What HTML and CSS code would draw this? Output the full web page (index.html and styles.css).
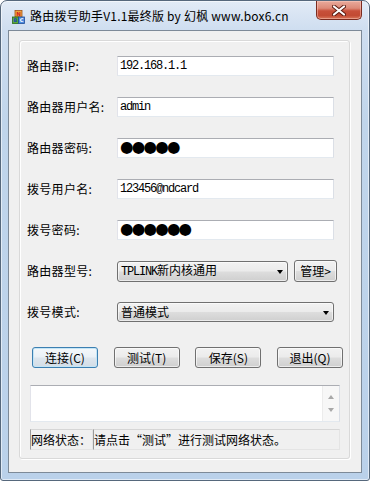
FILE: index.html
```html
<!DOCTYPE html>
<html lang="zh-CN">
<head>
<meta charset="utf-8">
<title>路由拨号助手</title>
<link rel="stylesheet" href="styles.css">
</head>
<body>
<div class="window">
  <div class="titlebar">
    <svg class="app-icon" width="13" height="14" viewBox="0 0 13 14">
      <rect x="3" y="0.5" width="7" height="6.5" fill="#f0a53c" stroke="#a0521a" stroke-width="0.8"/>
      <text x="6.5" y="5.8" font-size="5.5" font-family="DejaVu Sans" font-weight="bold" fill="#d21f1f" text-anchor="middle">N</text>
      <rect x="0.5" y="7" width="6" height="6.5" fill="#5aaa3c" stroke="#2b6a1c" stroke-width="0.8"/>
      <text x="3.5" y="12.3" font-size="5" font-family="DejaVu Sans" font-weight="bold" fill="#1e4ea8" text-anchor="middle">B</text>
      <rect x="6.5" y="7" width="6" height="6.5" fill="#4d8de0" stroke="#1e4d98" stroke-width="0.8"/>
      <text x="9.5" y="12.3" font-size="5" font-family="DejaVu Sans" font-weight="bold" fill="#ffffff" text-anchor="middle">C</text>
    </svg>
    <span class="title">路由拨号助手V1.1最终版 by 幻枫 www.box6.cn</span>
    <div class="close">
      <svg width="14" height="11" viewBox="0 0 14 11">
        <path d="M2 1.5 L12 9.5 M12 1.5 L2 9.5" stroke="#5a1a10" stroke-width="4" stroke-linecap="round"/>
        <path d="M2 1.5 L12 9.5 M12 1.5 L2 9.5" stroke="#ffffff" stroke-width="2.2" stroke-linecap="round"/>
      </svg>
    </div>
  </div>
  <div class="client">
    <div class="panel">
      <div class="row first">
        <span class="lbl">路由器IP:</span>
        <div class="edit mono">192.168.1.1</div>
      </div>
      <div class="row">
        <span class="lbl">路由器用户名:</span>
        <div class="edit mono">admin</div>
      </div>
      <div class="row">
        <span class="lbl">路由器密码:</span>
        <div class="edit dots">●●●●●</div>
      </div>
      <div class="row">
        <span class="lbl">拨号用户名:</span>
        <div class="edit mono">123456@ndcard</div>
      </div>
      <div class="row">
        <span class="lbl">拨号密码:</span>
        <div class="edit dots">●●●●●●</div>
      </div>
      <div class="row">
        <span class="lbl">路由器型号:</span>
        <div class="combo short"><span class="combo-text"><span class="mono-s">TPLINK</span>新内核通用</span><span class="arrow"></span></div>
        <div class="btn manage">管理&gt;</div>
      </div>
      <div class="row">
        <span class="lbl">拨号模式:</span>
        <div class="combo"><span class="combo-text">普通模式</span><span class="arrow"></span></div>
      </div>
      <div class="btn-row">
        <div class="btn default">连接(C)</div>
        <div class="btn">测试(T)</div>
        <div class="btn">保存(S)</div>
        <div class="btn">退出(Q)</div>
      </div>
      <div class="log">
        <div class="log-body"></div>
        <div class="vscroll">
          <span class="sarrow up"></span>
          <span class="sarrow down"></span>
        </div>
      </div>
      <div class="status">
        <div class="pane p1">网络状态：</div>
        <div class="pane p2">请点击“测试”进行测试网络状态。</div>
      </div>
    </div>
  </div>
</div>
</body>
</html>
```
FILE: styles.css
```css
* { box-sizing: border-box; }
html, body { margin: 0; padding: 0; background: #ffffff; }
body {
  font-family: "Noto Sans CJK SC", "Noto Sans", sans-serif;
  font-size: 12px;
  line-height: 1;
  color: #000;
}
.window {
  width: 370px;
  height: 481px;
  display: flex;
  flex-direction: column;
  border: 1px solid #56687c;
  border-radius: 7px 7px 3px 3px;
  background: linear-gradient(to bottom, #e2ebf6 0px, #cfdef0 28px, #c0d5eb 120px, #bad1ea 100%);
  box-shadow: inset 0 0 0 1px rgba(255,255,255,0.55);
  padding: 0 7px 7px 7px;
}
.titlebar {
  height: 29px;
  display: flex;
  align-items: center;
  padding-left: 4px;
  position: relative;
}
.app-icon { flex: none; margin-top: 2px; }
.title {
  margin-left: 5px;
  font-size: 12px;
  color: #000;
  letter-spacing: 0.2px;
  margin-top: 1px;
}
.close {
  margin-left: auto;
  align-self: flex-start;
  width: 46px;
  height: 19px;
  border: 1px solid #7b2b1f;
  border-top: none;
  border-radius: 0 0 5px 5px;
  background: linear-gradient(to bottom, #e9aa9c 0%, #dd8a78 40%, #c8503a 55%, #c24a33 80%, #d9765a 100%);
  box-shadow: inset 0 0 0 1px rgba(255,210,200,0.45);
  display: flex;
  align-items: center;
  justify-content: center;
}
.client {
  flex: 1;
  display: flex;
  flex-direction: column;
  border: 1px solid #7d8a98;
  background: #f0f0f0;
  padding: 9px 11px 13px 10px;
}
.panel {
  flex: 1;
  border: 1px solid #d9d9d9;
  border-radius: 3px;
  box-shadow: 1px 1px 0 #ffffff, inset 1px 1px 0 #ffffff;
  padding: 0 0 0 7px;
  display: flex;
  flex-direction: column;
}
.row {
  height: 20px;
  margin-top: 21px;
  display: flex;
  align-items: center;
}
.row.first { margin-top: 15px; }
.lbl {
  width: 90px;
  flex: none;
  white-space: nowrap;
  letter-spacing: 0.3px;
}
.edit {
  width: 217px;
  height: 20px;
  background: #fff;
  border: 1px solid;
  border-color: #abadb3 #dbdfe6 #e3e9ef #e2e3ea;
  padding-left: 2px;
  display: flex;
  align-items: center;
  white-space: nowrap;
}
.mono {
  font-family: "Liberation Mono", "DejaVu Sans Mono", monospace;
  font-size: 12px;
  letter-spacing: -1.2px;
}
.mono-s {
  font-family: "Liberation Mono", "DejaVu Sans Mono", monospace;
  font-size: 12px;
  letter-spacing: -1.2px;
}
.dots {
  font-family: "DejaVu Sans", sans-serif;
  font-size: 15.5px;
  letter-spacing: -1.8px;
  padding-left: 2px;
}
.combo {
  width: 217px;
  height: 20px;
  border: 1px solid #707070;
  border-radius: 3px;
  background: linear-gradient(to bottom, #f2f2f2 0%, #ebebeb 48%, #dddddd 52%, #cfcfcf 100%);
  box-shadow: inset 0 0 0 1px rgba(255,255,255,0.6);
  display: flex;
  align-items: center;
  padding-left: 3px;
  padding-right: 4px;
}
.combo.short { width: 171px; height: 21px; }
.combo-text { white-space: nowrap; }
.arrow {
  margin-left: auto;
  width: 0;
  height: 0;
  border-left: 3.5px solid transparent;
  border-right: 3.5px solid transparent;
  border-top: 4px solid #000;
  margin-top: 1px;
}
.btn {
  width: 66px;
  height: 21px;
  border: 1px solid #707070;
  border-radius: 3px;
  background: linear-gradient(to bottom, #f2f2f2 0%, #ebebeb 48%, #dddddd 52%, #cfcfcf 100%);
  box-shadow: inset 0 0 0 1px rgba(255,255,255,0.6);
  display: flex;
  align-items: center;
  justify-content: center;
  white-space: nowrap;
}
.btn.manage {
  width: 43px;
  margin-left: 6px;
  height: 22px;
}
.btn.default {
  border-color: #3c7fb1;
  box-shadow: inset 0 0 0 1px #c4e5f6;
  background: linear-gradient(to bottom, #f4f8fb 0%, #eaf1f6 48%, #dde6ee 52%, #d3dde6 100%);
}
.btn-row {
  margin-top: 25px;
  display: flex;
  justify-content: space-between;
  padding-left: 5px;
  padding-right: 6px;
}
.log {
  margin-top: 17px;
  margin-left: 3px;
  width: 310px;
  height: 37px;
  border: 1px solid;
  border-color: #abadb3 #dbdfe6 #e3e9ef #e2e3ea;
  background: #fff;
  display: flex;
}
.log-body { flex: 1; }
.vscroll {
  width: 17px;
  background: #f7f7f7;
  border-left: 1px solid #ececec;
  display: flex;
  flex-direction: column;
  align-items: center;
  justify-content: space-between;
  padding: 9px 0 9px 0;
}
.sarrow {
  width: 0;
  height: 0;
  border-left: 3.5px solid transparent;
  border-right: 3.5px solid transparent;
}
.sarrow.up { border-bottom: 4px solid #a8a8a8; }
.sarrow.down { border-top: 4px solid #a8a8a8; }
.status {
  margin-top: 7px;
  margin-left: 3px;
  width: 310px;
  height: 21px;
  display: flex;
}
.pane {
  height: 21px;
  border: 1px solid;
  border-color: #d6d6d6 #e4e4e4 #e4e4e4 #9a9a9a;
  display: flex;
  align-items: center;
  white-space: nowrap;
}
.p1 { width: 63px; }
.p2 { flex: 1; }
```
